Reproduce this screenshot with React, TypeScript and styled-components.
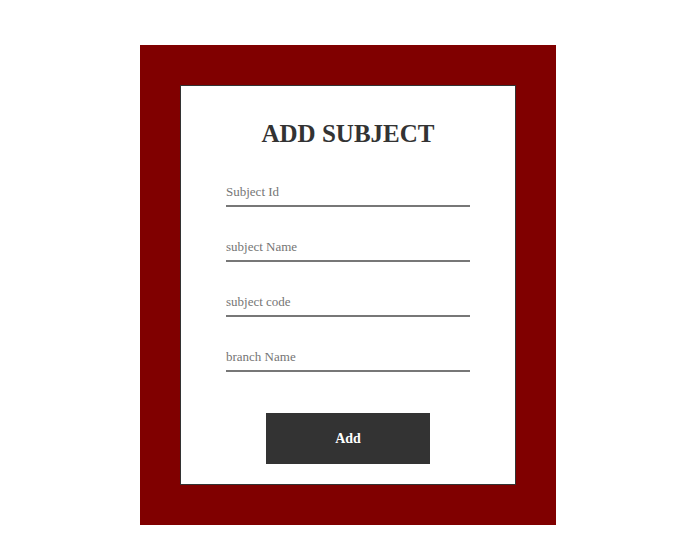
import React from "react";
import styled, { createGlobalStyle } from "styled-components";

const GlobalStyle = createGlobalStyle`
  html, body {
    margin: 0;
    padding: 0;
    background: #ffffff;
    font-family: "Liberation Serif", "Times New Roman", serif;
  }
`;

const Page = styled.div`
  padding: 45px 0 0 140px;
`;

const Frame = styled.div`
  width: 416px;
  height: 480px;
  box-sizing: border-box;
  padding: 40px;
  background: #800000;
`;

const Card = styled.form`
  box-sizing: border-box;
  width: 336px;
  height: 400px;
  border: 1px solid #333333;
  background: #ffffff;
  display: flex;
  flex-direction: column;
  align-items: center;
  padding: 34px 0 20px;
`;

const Title = styled.h2`
  margin: 0 0 28px;
  font-size: 25px;
  line-height: 28px;
  font-weight: bold;
  color: #333333;
`;

const Fields = styled.div`
  display: flex;
  flex-direction: column;
  gap: 24px;
`;

const Field = styled.input`
  display: block;
  box-sizing: border-box;
  width: 244px;
  height: 31px;
  margin: 0;
  padding: 8px 0 6px;
  border: none;
  border-bottom: 2px solid #777777;
  outline: none;
  background: transparent;
  font-family: "Liberation Serif", "Times New Roman", serif;
  font-size: 13px;
  line-height: 15px;
  color: #333333;

  &::placeholder {
    color: #757575;
  }
`;

const Button = styled.button`
  margin-top: 41px;
  width: 164px;
  height: 51px;
  border: none;
  background: #333333;
  color: #ffffff;
  font-family: "Liberation Serif", "Times New Roman", serif;
  font-size: 14px;
  font-weight: bold;
  cursor: pointer;
`;

const fields = ["Subject Id", "subject Name", "subject code", "branch Name"];

export default function App() {
  return (
    <>
      <GlobalStyle />
      <Page>
        <Frame>
          <Card onSubmit={(e) => e.preventDefault()}>
            <Title>ADD SUBJECT</Title>
            <Fields>
              {fields.map((f) => (
                <Field key={f} type="text" placeholder={f} />
              ))}
            </Fields>
            <Button type="submit">Add</Button>
          </Card>
        </Frame>
      </Page>
    </>
  );
}
